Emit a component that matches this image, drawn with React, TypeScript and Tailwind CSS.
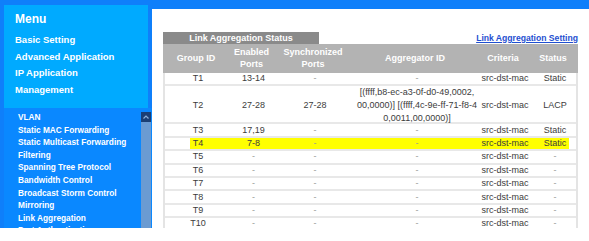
const mainMenu = ["Basic Setting", "Advanced Application", "IP Application", "Management"];

const subMenu = [
  "VLAN",
  "Static MAC Forwarding",
  "Static Multicast Forwarding",
  "Filtering",
  "Spanning Tree Protocol",
  "Bandwidth Control",
  "Broadcast Storm Control",
  "Mirroring",
  "Link Aggregation",
  "Port Authentication",
];

type Row = {
  id: string;
  enabled: string;
  synced: string;
  agg: string[];
  criteria: string;
  status: string;
  mark?: boolean;
};

const rows: Row[] = [
  { id: "T1", enabled: "13-14", synced: "-", agg: ["-"], criteria: "src-dst-mac", status: "Static" },
  {
    id: "T2",
    enabled: "27-28",
    synced: "27-28",
    agg: ["[(ffff,b8-ec-a3-0f-d0-49,0002,", "00,0000)] [(ffff,4c-9e-ff-71-f8-4", "0,0011,00,0000)]"],
    criteria: "src-dst-mac",
    status: "LACP",
  },
  { id: "T3", enabled: "17,19", synced: "-", agg: ["-"], criteria: "src-dst-mac", status: "Static" },
  { id: "T4", enabled: "7-8", synced: "-", agg: ["-"], criteria: "src-dst-mac", status: "Static", mark: true },
  ...["T5", "T6", "T7", "T8", "T9", "T10"].map((id) => ({
    id,
    enabled: "-",
    synced: "-",
    agg: ["-"],
    criteria: "src-dst-mac",
    status: "-",
  })),
];

const cols = "grid grid-cols-[66px_45px_78px_126px_50px_50px]";

function Cell({ children, dim }: { children: React.ReactNode; dim?: boolean }) {
  return <div className={`relative text-center ${dim ? "text-[#9a9a9a]" : "text-[#3c3c3c]"}`}>{children}</div>;
}

function App() {
  return (
    <div className="w-[589px] h-[241px] bg-white overflow-hidden font-['Liberation_Sans',Arial,sans-serif]">
      <div className="flex h-[228px]">
        {/* left menu */}
        <aside className="w-[152px] shrink-0 bg-[#0f7ffa] flex flex-col pt-[5px] pl-[4px]">
          <div className="h-[103px] mr-[4px] bg-[#00aaff] pl-[11px] pt-[7px] text-white font-bold">
            <div className="text-[12px] leading-[14px]">Menu</div>
            <div className="mt-[6px] text-[9.5px]">
              {mainMenu.map((m) => (
                <div key={m} className="leading-[16.5px]">
                  {m}
                </div>
              ))}
            </div>
          </div>
          <div className="flex-1 min-h-0 flex bg-[#0a88ff]">
            <div className="flex-1 overflow-hidden pl-[14px] pt-[3px] text-white font-bold text-[8.3px]">
              {subMenu.map((m) => (
                <div key={m} className="leading-[12.6px] whitespace-nowrap">
                  {m}
                </div>
              ))}
            </div>
            <div className="w-[10px] mt-[4px] mr-[1px] flex flex-col">
              <div className="h-[10px] bg-[#1b3f74] flex items-center justify-center">
                <svg width="6" height="4" viewBox="0 0 6 4">
                  <path d="M0.5 3.5 L3 1 L5.5 3.5" fill="none" stroke="#8fb0d8" strokeWidth="1.2" />
                </svg>
              </div>
              <div className="flex-1 bg-[#6b9bd2]" />
            </div>
          </div>
        </aside>

        {/* content */}
        <main className="flex-1 border-t-[9px] border-[#0f7ffa] overflow-hidden pl-[11px] pt-[23px]">
          <div className="w-[415px]">
            <div className="flex items-end justify-between h-[12px]">
              <div className="w-[156px] h-[12px] bg-[#8a8a8a] text-white font-bold text-[9px] leading-[12px] text-center">
                Link Aggregation Status
              </div>
              <a className="text-[#1f4fd0] font-bold text-[8.6px] leading-[11px] underline">Link Aggregation Setting</a>
            </div>

            <div className={`${cols} h-[29px] bg-[#b3b3b3] items-center text-white font-bold text-[9px] leading-[11.5px] text-center`}>
              <div>Group ID</div>
              <div>
                Enabled
                <br />
                Ports
              </div>
              <div>
                Synchronized
                <br />
                Ports
              </div>
              <div>Aggregator ID</div>
              <div>Criteria</div>
              <div>Status</div>
            </div>

            <div className="border-x-2 border-[#e4e4e4] text-[9px]">
              {rows.map((r) => (
                <div
                  key={r.id}
                  className={`${cols} relative items-center border-b-2 border-[#e8e8e8] ${
                    r.agg.length > 1 ? "h-[38px] leading-[13px]" : "h-[13.4px] leading-[11px]"
                  }`}
                >
                  {r.mark && <div className="absolute left-[25px] w-[379px] top-0 bottom-0 bg-[#ffff00]" />}
                  <Cell>{r.id}</Cell>
                  <Cell dim={r.enabled === "-"}>{r.enabled}</Cell>
                  <Cell dim={r.synced === "-"}>{r.synced}</Cell>
                  <Cell dim={r.agg[0] === "-"}>
                    {r.agg.map((a, i) => (
                      <div key={i} className="whitespace-nowrap">
                        {a}
                      </div>
                    ))}
                  </Cell>
                  <Cell>{r.criteria}</Cell>
                  <Cell dim={r.status === "-"}>{r.status}</Cell>
                </div>
              ))}
            </div>
          </div>
        </main>
      </div>
    </div>
  );
}

export default App;
